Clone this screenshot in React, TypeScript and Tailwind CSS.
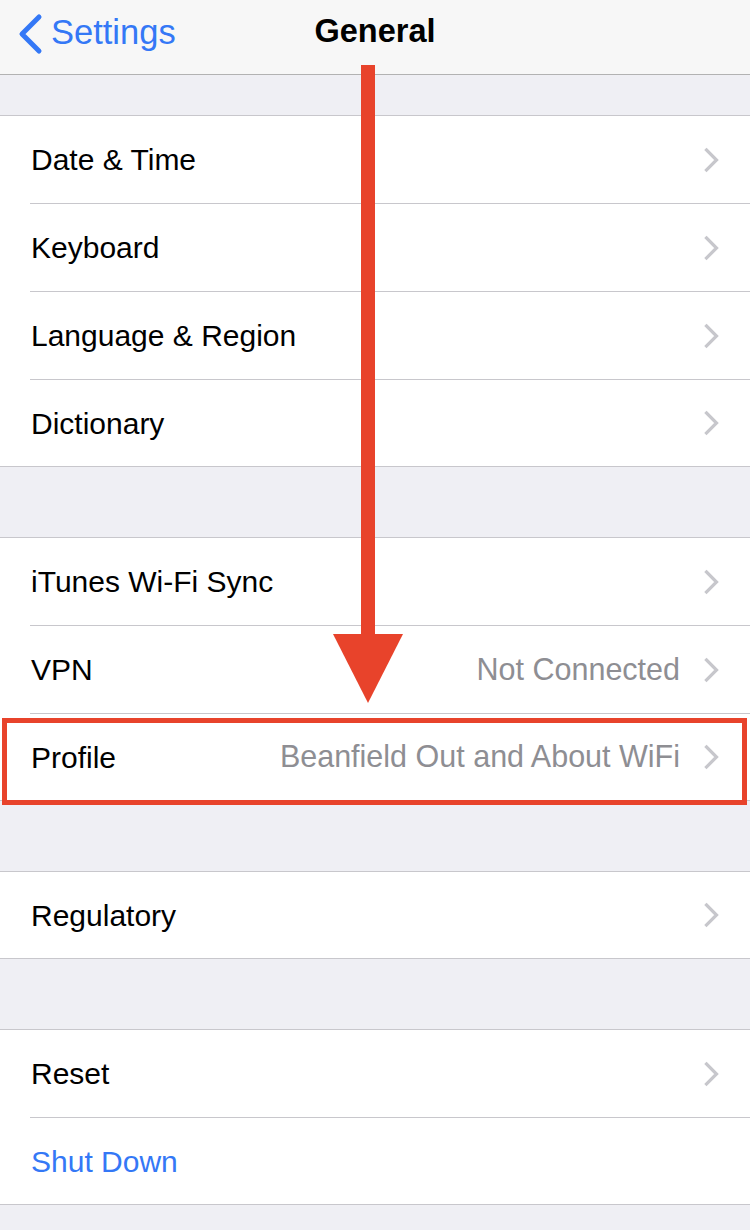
import React from "react"

type Row = { label: string; value?: string; chevron?: boolean; blue?: boolean }

const sections: Row[][] = [
  [
    { label: "Date & Time", chevron: true },
    { label: "Keyboard", chevron: true },
    { label: "Language & Region", chevron: true },
    { label: "Dictionary", chevron: true },
  ],
  [
    { label: "iTunes Wi-Fi Sync", chevron: true },
    { label: "VPN", value: "Not Connected", chevron: true },
    { label: "Profile", value: "Beanfield Out and About WiFi", chevron: true },
  ],
  [{ label: "Regulatory", chevron: true }],
  [
    { label: "Reset", chevron: true },
    { label: "Shut Down", blue: true },
  ],
]

function Chevron() {
  return (
    <svg width="18" height="26" viewBox="0 0 18 26" className="shrink-0">
      <path d="M3.5 3 L13.5 13 L3.5 23" fill="none" stroke="#c7c7cc" strokeWidth="3.2" strokeLinecap="square" strokeLinejoin="miter" />
    </svg>
  )
}

function SettingsRow({ row, last }: { row: Row; last: boolean }) {
  return (
    <div className="pl-[30px]">
      <div className={`flex items-center pr-[29px] ${last ? "h-[86px]" : "h-[88px] border-b border-[#c8c7cc]"}`}>
        <span className={`pl-[1px] text-[30px] ${row.blue ? "text-[#3478f6]" : "text-black"}`}>{row.label}</span>
        <div className="flex-1" />
        {row.value && <span className="text-[30.5px] text-[#8e8e93] mr-[23px]">{row.value}</span>}
        {row.chevron && <Chevron />}
      </div>
    </div>
  )
}

export default function App() {
  return (
    <div className="relative w-[750px] h-[1230px] overflow-hidden bg-[#efeff4] font-['Liberation_Sans',Arial,sans-serif]">
      {/* nav bar */}
      <div className="relative h-[75px] bg-[#f7f7f7] border-b border-[#b2b2b2] flex items-center">
        <div className="flex items-center pl-[17px] -mt-[6px] text-[#3478f6]">
          <svg width="28" height="42" viewBox="0 0 28 42">
            <path d="M22 4 L5 21 L22 38" fill="none" stroke="#3478f6" strokeWidth="5" strokeLinecap="round" strokeLinejoin="round" />
          </svg>
          <span className="ml-[6px] text-[34.5px] leading-none -mt-[4px]">Settings</span>
        </div>
        <div className="absolute left-0 right-0 top-0 h-[62px] flex items-center justify-center">
          <span className="text-[32.5px] font-bold text-black">General</span>
        </div>
      </div>

      <div className="pt-[40px] flex flex-col gap-[70px]">
        {sections.map((rows, i) => (
          <div key={i} className="bg-white border-y border-[#c8c7cc]">
            {rows.map((row, j) => (
              <SettingsRow key={row.label} row={row} last={j === rows.length - 1} />
            ))}
          </div>
        ))}
      </div>

      {/* annotation: red arrow */}
      <svg className="absolute left-0 top-0" width="750" height="1230" viewBox="0 0 750 1230">
        <rect x="361" y="65" width="14" height="571" fill="#e8432b" />
        <polygon points="333,634 403,634 368,703" fill="#e8432b" />
      </svg>

      {/* annotation: red box round Profile */}
      <div className="absolute left-[2px] top-[718px] w-[745px] h-[87px] border-[5px] border-[#e8432b]" />
    </div>
  )
}
